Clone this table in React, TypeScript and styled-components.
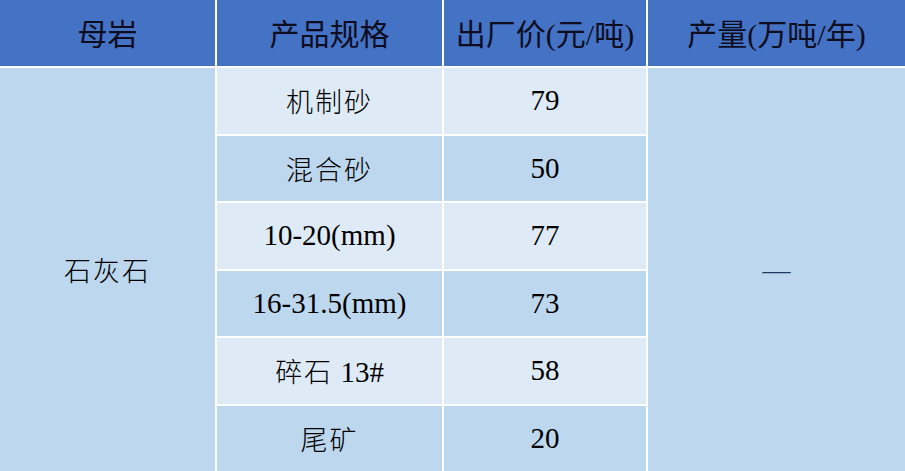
import { createGlobalStyle } from "styled-components";
import styled from "styled-components";

const GlobalStyle = createGlobalStyle`
  html, body {
    margin: 0;
    padding: 0;
    background: #ffffff;
  }
`;

const Table = styled.table`
  width: 905px;
  border-collapse: collapse;
  table-layout: fixed;
  font-family: "Liberation Serif", "Noto Sans CJK SC", serif;
  color: #000000;
`;

const HeadRow = styled.tr`
  height: 67px;
  background: #4472c4;
`;

const BodyRow = styled.tr<{ $light?: boolean }>`
  height: 67.5px;
  background: ${({ $light }) => ($light ? "#deebf7" : "#bdd7ee")};
`;

const HeadCell = styled.th`
  border: 2px solid #ffffff;
  border-top: none;
  font-size: 30px;
  font-weight: 400;
  color: #0d0d1f;
  text-align: center;
  vertical-align: middle;
  padding: 0 0 3px;
  white-space: nowrap;
  &:first-child {
    border-left: none;
  }
  &:last-child {
    border-right: none;
  }
`;

const Cell = styled.td<{ $tone?: "light" | "dark" }>`
  border: 2px solid #ffffff;
  text-align: center;
  vertical-align: middle;
  padding: 0;
  font-size: 29px;
  font-weight: 300;
  white-space: nowrap;
  background: ${({ $tone }) =>
    $tone === "light" ? "#deebf7" : $tone === "dark" ? "#bdd7ee" : "transparent"};
`;

const MergedCell = styled(Cell)`
  background: #bdd7ee;
  &:first-child {
    border-left: none;
  }
`;

const LastMerged = styled(MergedCell)`
  border-right: none;
`;

const Cjk = styled.span`
  letter-spacing: 2px;
  font-size: 27px;
`;

const Dash = styled.span`
  color: #1f3864;
  font-size: 28px;
`;

const rows = [
  { spec: <Cjk>机制砂</Cjk>, price: "79" },
  { spec: <Cjk>混合砂</Cjk>, price: "50" },
  { spec: "10-20(mm)", price: "77" },
  { spec: "16-31.5(mm)", price: "73" },
  {
    spec: (
      <>
        <Cjk>碎石</Cjk> 13#
      </>
    ),
    price: "58",
  },
  { spec: <Cjk>尾矿</Cjk>, price: "20" },
];

export default function App() {
  return (
    <>
      <GlobalStyle />
      <Table>
        <colgroup>
          <col style={{ width: 216 }} />
          <col style={{ width: 227 }} />
          <col style={{ width: 204 }} />
          <col style={{ width: 258 }} />
        </colgroup>
        <thead>
          <HeadRow>
            <HeadCell>母岩</HeadCell>
            <HeadCell>产品规格</HeadCell>
            <HeadCell>出厂价(元/吨)</HeadCell>
            <HeadCell>产量(万吨/年)</HeadCell>
          </HeadRow>
        </thead>
        <tbody>
          {rows.map((r, i) => {
            const light = i % 2 === 0;
            return (
              <BodyRow key={i} $light={light}>
                {i === 0 && (
                  <MergedCell rowSpan={rows.length}>
                    <Cjk>石灰石</Cjk>
                  </MergedCell>
                )}
                <Cell $tone={light ? "light" : "dark"}>{r.spec}</Cell>
                <Cell $tone={light ? "light" : "dark"}>{r.price}</Cell>
                {i === 0 && (
                  <LastMerged rowSpan={rows.length}>
                    <Dash>—</Dash>
                  </LastMerged>
                )}
              </BodyRow>
            );
          })}
        </tbody>
      </Table>
    </>
  );
}
